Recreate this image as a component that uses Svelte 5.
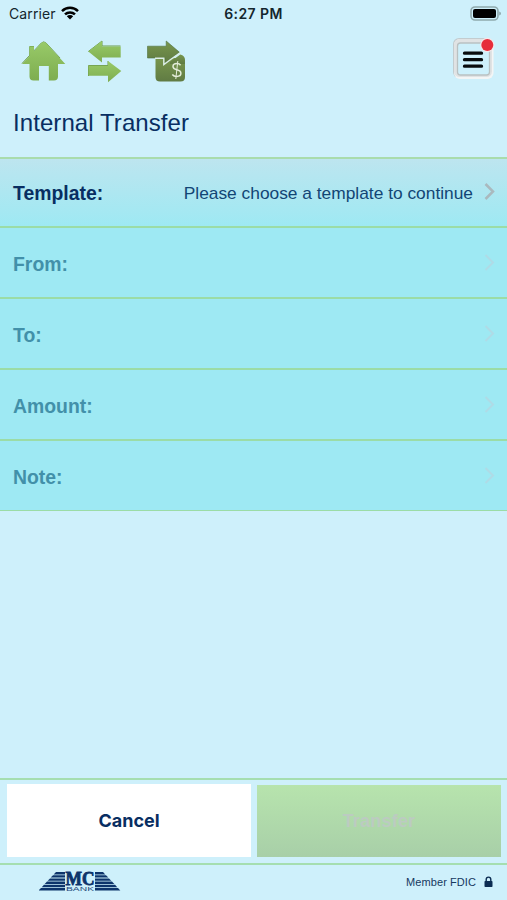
<script>
  let rows = [
    { label: 'Template:', value: 'Please choose a template to continue', enabled: true },
    { label: 'From:', value: '', enabled: false },
    { label: 'To:', value: '', enabled: false },
    { label: 'Amount:', value: '', enabled: false },
    { label: 'Note:', value: '', enabled: false }
  ];

  const stripes = [0, 1, 2, 3, 4, 5];
</script>

<div class="screen">
  <div class="status-bar">
    <div class="carrier">
      <span>Carrier</span>
      <svg width="18" height="14" viewBox="0 0 18 14">
        <g fill="none" stroke="#000" stroke-width="2.5">
          <path d="M1 5.1a11.5 11.5 0 0 1 16 0" />
          <path d="M4 8.4a7.2 7.2 0 0 1 10 0" />
        </g>
        <path d="M9 13.4l-3.2-3.1a4.6 4.6 0 0 1 6.4 0z" />
      </svg>
    </div>
    <div class="time">6:27 PM</div>
    <svg class="battery" width="32" height="15" viewBox="0 0 32 15">
      <rect x="1" y="1" width="27" height="13" rx="4" fill="none" stroke="#8fa9ad" stroke-width="1.6" />
      <rect x="3" y="3" width="23" height="9" rx="2" />
      <path d="M29.2 5.5q1.8.6 1.8 2t-1.8 2z" fill="#8fa9ad" />
    </svg>
  </div>

  <div class="toolbar">
    <svg width="190" height="60" viewBox="0 0 190 60">
      <defs>
        <linearGradient id="leaf" x1="0" y1="0" x2="0" y2="1">
          <stop offset="0" stop-color="#98ca68" />
          <stop offset="1" stop-color="#7ead50" />
        </linearGradient>
        <linearGradient id="olive" x1="0" y1="0" x2="0" y2="1">
          <stop offset="0" stop-color="#78964d" />
          <stop offset="1" stop-color="#607b43" />
        </linearGradient>
      </defs>
      <g fill="none" stroke="#6d9a4d" stroke-width="1">
        <path d="M22 35.5L41.3 15q2.4-2.3 4.8 0L60 30M29.7 27.5V18.5H34" />
        <path d="M88.3 23.5L102 13v5h18.5M88.5 48V37.500H108V33" />
      </g>
      <path fill="url(#leaf)" d="M22 36L29.5 28V18.5H34v4.8L41.3 15q2.4-2.2 4.8 0L65.3 36H58v12.5q0 4-4 4h-5.2V38H39v14.5h-5.500q-4 0-4-4V36z" />
      <path fill="url(#leaf)" d="M88.3 23.5L102 13v5.5h18.7v11H102v5z" />
      <path fill="url(#leaf)" d="M121.3 43L108 33v4.8H88.5v10H108v6.4z" />
      <path fill="url(#olive)" d="M155.5 30h24.5q5 0 5 5v14q0 4.500-4.500 4.500h-20.500q-4.500 0-4.500-4.500z" />
      <path fill="#cef0fb" d="M167 33l14-11h5v8.500q-1.500-2.500-4.500-4z" />
      <path fill="url(#olive)" d="M170 34l10.300-7.500q4.700 1 4.700 5.500v4h-15z" />
      <path fill="url(#olive)" stroke="#4f703e" stroke-width=".6" d="M147.500 18.200h18.700V13l13.300 11.300-14.300 10.500V30h-17.700z" />
      <path fill="none" stroke="#dceee8" stroke-width="1.400" d="M155 30.300h8.800v6.200l7.200-5.300 9.500-6.500" />
      <g fill="none" stroke="#e4edda" stroke-width="1.5">
        <path d="M180.600 37.200q-1.200-1.700-3.700-1.700-3.900 0-3.900 3 0 2.400 3.700 3.200 4.200.9 4.200 3.600 0 3.100-4.100 3.100-3.100 0-4.500-1.900" />
        <path d="M177.800 33l-2 18" stroke-width="1" />
      </g>
    </svg>

    <button class="menu" aria-label="Menu">
      <svg width="46" height="46" viewBox="0 0 46 46">
        <rect x="2" y="3" width="40" height="40" rx="6" fill="#c3cccf" />
        <rect x="3" y="4" width="39.500" height="40" rx="6" fill="#f3f5f5" />
        <rect x="3" y="4" width="38" height="38" rx="5.500" fill="#e0e3e4" />
        <rect x="6.500" y="8" width="32" height="32" rx="3" fill="#cef0fb" stroke="#b9c1c2" stroke-width="1.300" />
        <g stroke="#080b0d" stroke-width="3.300" stroke-linecap="round">
          <path d="M13.500 18.200h17M13.500 24.700h17M13.500 31.200h17" />
        </g>
        <circle cx="36.300" cy="10" r="7.200" fill="#f3e8eb" />
        <circle cx="36.300" cy="10" r="6" fill="#e62c3a" />
      </svg>
    </button>
  </div>

  <h1>Internal Transfer</h1>

  <div class="form">
    {#each rows as row}
      <div class="row" class:enabled={row.enabled}>
        <span class="label">{row.label}</span>
        <span class="value">{row.value}</span>
        <svg class="chevron" width="13" height="20" viewBox="0 0 13 20">
          <path d="M2.500 2l7.500 7.500L2.500 17" />
        </svg>
      </div>
    {/each}
  </div>

  <div class="actions">
    <button class="cancel">Cancel</button>
    <button class="transfer" disabled>Transfer</button>
  </div>

  <footer>
    <svg class="logo" width="82" height="22" viewBox="0 0 82 22">
      <g fill="#0d346b">
        {#each stripes as i}
          <path d="M{17 - i * 3} {1 + i * 3.2}H{26}v2.400H{14.700 - i * 3}z" />
          <path d="M{64 + i * 3} {1 + i * 3.2}H{56}v2.400H{66.300 + i * 3}z" />
        {/each}
      </g>
      <text x="26.500" y="14.300" textLength="29" lengthAdjust="spacingAndGlyphs" class="logo-name">MC</text>
      <text x="27" y="20" textLength="28" lengthAdjust="spacingAndGlyphs" class="logo-bank">BANK</text>
    </svg>
    <div class="fdic">
      <span>Member FDIC</span>
      <svg width="9" height="12" viewBox="0 0 9 12">
        <path d="M2.200 6V3.400a2.300 2.300 0 0 1 4.600 0V6" fill="none" stroke="#0b2c52" stroke-width="1.400" />
        <rect x=".5" y="5" width="8" height="6" rx=".8" fill="#0b2c52" />
      </svg>
    </div>
  </footer>
</div>

<style>
  :global(body) {
    margin: 0;
    background: #cef0fb;
  }

  .screen {
    display: flex;
    flex-direction: column;
    width: 507px;
    height: 900px;
    overflow: hidden;
    background: #cef0fb;
    color: #082e62;
    font-family: "Liberation Sans", Arial, sans-serif;
  }

  .status-bar {
    display: grid;
    grid-template-columns: 1fr auto 1fr;
    align-items: center;
    height: 26px;
    padding: 0 5px 0 9px;
    box-sizing: border-box;
    color: #14262d;
    font-family: Inter, sans-serif;
    font-size: 14px;
  }

  .carrier {
    display: flex;
    align-items: center;
    gap: 5px;
    letter-spacing: 0.1px;
  }

  .time {
    margin-left: -4px;
    font-weight: 600;
    letter-spacing: 0.4px;
  }

  .battery {
    justify-self: end;
  }

  .toolbar {
    display: flex;
    justify-content: space-between;
    height: 66px;
    padding: 2px 10px 0 0;
    box-sizing: border-box;
  }

  button {
    border: 0;
    padding: 0;
    font-family: inherit;
  }

  .menu {
    width: 46px;
    height: 46px;
    margin-top: 7px;
    background: none;
  }

  .menu svg {
    display: block;
  }

  h1 {
    height: 65px;
    margin: 0;
    padding: 16px 13px 0;
    box-sizing: border-box;
    font-size: 24px;
    line-height: 30px;
    font-weight: 400;
    letter-spacing: 0.08px;
  }

  .form {
    border-top: 2px solid #a9dcac;
  }

  .row {
    display: flex;
    align-items: center;
    height: 71px;
    padding: 4px 10px 0 13px;
    box-sizing: border-box;
    border-bottom: 2px solid #9bdca6;
    background: #9ee9f3;
  }

  .row.enabled {
    height: 69px;
    padding-top: 2px;
    background: linear-gradient(#bde5ef, #9ee9f3);
  }

  .row:last-child {
    border-bottom-width: 1px;
    height: 70px;
  }

  .label {
    font-size: 19.4px;
    font-weight: 700;
    color: #4290a9;
  }

  .enabled .label {
    color: #082e62;
  }

  .value {
    flex: 1;
    margin-right: 11px;
    text-align: right;
    font-size: 17.35px;
    color: #124575;
  }

  .chevron {
    margin: -4px 1px 0 -1px;
  }

  .chevron path {
    fill: none;
    stroke: #afdbe6;
    stroke-width: 2;
  }

  .enabled .chevron path {
    stroke: #aab9be;
    stroke-width: 2.5;
  }

  .actions {
    display: flex;
    gap: 6px;
    height: 87px;
    margin-top: auto;
    padding: 4px 6px 6px 7px;
    box-sizing: border-box;
    border-top: 2px solid #a5deb0;
    border-bottom: 2px solid #a5deb0;
  }

  .actions button {
    flex: 1;
    font-family: Inter, sans-serif;
    font-size: 18px;
    font-weight: 700;
  }

  .cancel {
    background: #fff;
    color: #082e62;
  }

  .actions .transfer {
    margin-top: 1px;
    background: linear-gradient(#b7e4ad, #a8cfa8);
    color: #bccbc1;
    font-family: "Liberation Sans", Arial, sans-serif;
    font-size: 18px;
    letter-spacing: 0.2px;
  }

  footer {
    display: flex;
    justify-content: space-between;
    height: 35px;
    padding: 6px 14px 0 39px;
    box-sizing: border-box;
  }

  .logo-name {
    font-family: "Liberation Serif", serif;
    font-size: 18px;
    font-weight: 700;
    fill: #0d346b;
    stroke: #0d346b;
    stroke-width: 0.8;
  }

  .logo-bank {
    font-family: "Liberation Sans", Arial, sans-serif;
    font-size: 6px;
    fill: #24487a;
  }

  .fdic {
    display: flex;
    align-items: center;
    gap: 8px;
    height: 22px;
    font-size: 11px;
    letter-spacing: 0.08px;
    color: #16395f;
  }
</style>
